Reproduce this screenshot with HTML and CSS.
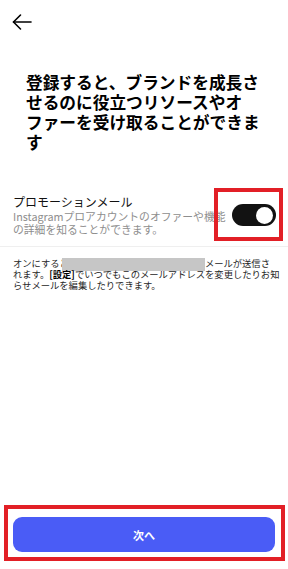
FILE: index.html
```html
<!DOCTYPE html>
<html lang="ja">
<head>
<meta charset="utf-8">
<link rel="stylesheet" href="styles.css">
</head>
<body>
<div class="screen">
  <header class="top">
    <button class="back" aria-label="戻る">
      <svg width="20" height="20" viewBox="0 0 20 20" fill="none" stroke="#000" stroke-width="1.6" stroke-linecap="round" stroke-linejoin="round">
        <path d="M1.5 10H19"/>
        <path d="M8.5 3L1.5 10L8.5 17"/>
      </svg>
    </button>
  </header>

  <h1 class="title">登録すると、ブランドを成長さ<br>せるのに役立つリソースやオ<br>ファーを受け取ることができま<br>す</h1>

  <section class="promo">
    <div class="promo-text">
      <div class="promo-title">プロモーションメール</div>
      <p class="promo-desc">Instagramプロアカウントのオファーや機能<br>の詳細を知ることができます。</p>
    </div>
    <div class="toggle-wrap">
      <span class="toggle"><span class="knob"></span></span>
      <span class="mark mark-toggle"></span>
    </div>
  </section>

  <p class="info">オンにすると<span class="redact"></span>メールが送信さ<br>れます。<b>[設定]</b>でいつでもこのメールアドレスを変更したりお知<br>らせメールを編集したりできます。</p>

  <div class="spacer"></div>

  <div class="footer">
    <div class="mark-box">
      <button class="next">次へ</button>
    </div>
  </div>
</div>
</body>
</html>
```

FILE: styles.css
```css
* { box-sizing: border-box; }

html, body {
  margin: 0;
  padding: 0;
  background: #fff;
}

body {
  font-family: "Noto Sans CJK JP", "Noto Sans", sans-serif;
  color: #000;
}

.screen {
  width: 288px;
  height: 569px;
  display: flex;
  flex-direction: column;
}

.top {
  height: 44px;
  display: flex;
  align-items: center;
  padding-left: 12px;
}

.back {
  border: 0;
  background: none;
  padding: 0;
  width: 20px;
  height: 20px;
  display: flex;
}

.title {
  margin: 28px 0 0;
  padding: 0 0 0 26px;
  font-size: 16.7px;
  line-height: 20px;
  font-weight: 700;
  white-space: nowrap;
  color: #000;
}

.promo {
  margin-top: 41.5px;
  padding: 0 12px 9px 13px;
  border-bottom: 1px solid #efefef;
  display: flex;
  align-items: center;
}

.promo-text {
  flex: 1;
  min-width: 0;
  white-space: nowrap;
}

.promo-title {
  font-size: 12px;
  line-height: 16px;
  color: #111;
}

.promo-desc {
  margin: 0;
  font-size: 10.8px;
  line-height: 13.5px;
  color: #8e8e8e;
}

.toggle-wrap {
  position: relative;
  width: 44px;
  height: 22px;
  flex: none;
}

.toggle {
  display: flex;
  align-items: center;
  justify-content: flex-end;
  width: 44px;
  height: 22px;
  border-radius: 11px;
  background: #121212;
  padding-right: 3px;
}

.knob {
  width: 17px;
  height: 17px;
  border-radius: 50%;
  background: #fff;
}

.mark {
  position: absolute;
  border: 4.5px solid #e21f26;
}

.mark-toggle {
  left: -18px;
  right: -7px;
  top: -16px;
  bottom: -15px;
}

.info {
  margin: 11px 0 0;
  padding: 0 13px;
  font-size: 9.3px;
  line-height: 11px;
  color: #262626;
  white-space: nowrap;
}

.info b {
  font-weight: 700;
  color: #000;
}

.redact {
  display: inline-block;
  width: 143px;
  height: 13px;
  margin: -3px 0 -3px -7px;
  vertical-align: -1px;
  background: #c6c6c6;
}

.spacer {
  flex: 1;
}

.footer {
  padding: 0 3px 8px 4px;
}

.mark-box {
  border: 4.5px solid #e21f26;
  padding: 8px 6px 5px 5px;
}

.next {
  display: block;
  width: 100%;
  height: 35px;
  border: 0;
  border-radius: 9px;
  background: #4a5cf6;
  color: #fff;
  font-family: "Noto Sans CJK JP", "Noto Sans", sans-serif;
  font-size: 11px;
  font-weight: 700;
  padding: 0;
}
```
